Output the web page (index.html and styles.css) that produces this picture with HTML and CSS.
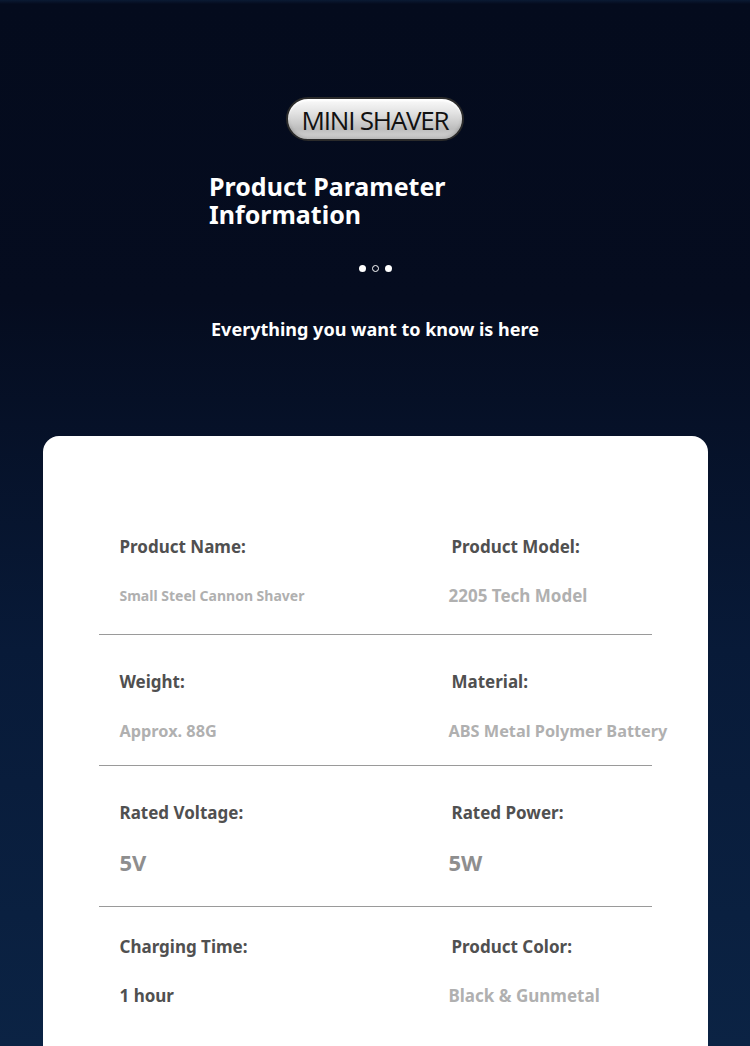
FILE: index.html
```html
<!DOCTYPE html>
<html lang="en">
<head>
<meta charset="utf-8">
<title>Mini Shaver - Product Parameter Information</title>
<link rel="stylesheet" href="styles.css">
</head>
<body>
<div class="page">
  <header class="hero">
    <div class="pill">MINI SHAVER</div>
    <div class="hero-text">
      <h1 class="title"><span class="line">Product Parameter</span><span class="line">Information</span></h1>
      <div class="dots"><span class="dot"></span><span class="dot hollow"></span><span class="dot"></span></div>
      <p class="subtitle">Everything you want to know is here</p>
    </div>
  </header>
  <main class="card">
    <div class="row">
      <div class="cell"><div class="label">Product Name:</div><div class="value small">Small Steel Cannon Shaver</div></div>
      <div class="cell right"><div class="label">Product Model:</div><div class="value wide">2205 Tech Model</div></div>
    </div>
    <div class="row">
      <div class="cell"><div class="label">Weight:</div><div class="value">Approx. 88G</div></div>
      <div class="cell right"><div class="label">Material:</div><div class="value">ABS Metal Polymer Battery</div></div>
    </div>
    <div class="row">
      <div class="cell"><div class="label">Rated Voltage:</div><div class="value big">5V</div></div>
      <div class="cell right"><div class="label">Rated Power:</div><div class="value big">5W</div></div>
    </div>
    <div class="row last">
      <div class="cell"><div class="label">Charging Time:</div><div class="value dark">1 hour</div></div>
      <div class="cell right"><div class="label">Product Color:</div><div class="value wide">Black &amp; Gunmetal</div></div>
    </div>
  </main>
</div>
</body>
</html>
```

FILE: styles.css
```css
* { box-sizing: border-box; }
html, body { margin: 0; padding: 0; }
body {
  width: 750px;
  height: 1046px;
  overflow: hidden;
  background: linear-gradient(180deg, #0a1a33 0px, #040b1d 4px, #050c1f 300px, #081a38 650px, #0b2344 1046px);
  font-family: "Noto Sans", "Open Sans", "DejaVu Sans", sans-serif;
}
.page { display: flex; flex-direction: column; align-items: center; }
.hero {
  padding-top: 97px;
  display: flex;
  flex-direction: column;
  align-items: center;
}
.pill {
  width: 178px;
  height: 44px;
  border-radius: 22px;
  border: 2px solid #2b2b2b;
  background: linear-gradient(180deg, #fbfbfb 0%, #e2e2e2 35%, #bdbdbd 75%, #d6d6d6 100%);
  box-shadow: inset 0 2px 2px rgba(255,255,255,0.9), inset 0 -2px 3px rgba(0,0,0,0.15);
  color: #111;
  font-family: "Open Sans", sans-serif;
  font-size: 26px;
  font-weight: 400;
  letter-spacing: -1.2px;
  display: flex;
  align-items: center;
  justify-content: center;
  line-height: 1;
  padding-top: 1px;
}
.hero-text {
  width: 332px;
  display: flex;
  flex-direction: column;
  align-items: center;
}
.title {
  align-self: stretch;
  margin: 31px 0 0;
  color: #fff;
  font-size: 25px;
  line-height: 28px;
  font-weight: 700;
  text-align: left;
  display: flex;
  flex-direction: column;
}
.line { display: block; white-space: nowrap; }
.dots {
  margin-top: 37px;
  display: flex;
  gap: 6px;
}
.dot {
  width: 7px;
  height: 7px;
  border-radius: 50%;
  background: #fff;
}
.dot.hollow {
  background: transparent;
  border: 1.8px solid #fff;
}
.subtitle {
  margin: 45px 0 0;
  color: #fff;
  font-size: 18px;
  line-height: 24px;
  font-weight: 700;
  white-space: nowrap;
}
.card {
  margin-top: 95px;
  width: 665px;
  height: 700px;
  background: #fff;
  border-radius: 16px 16px 0 0;
  padding: 64px 56px 0;
}
.row {
  display: grid;
  grid-template-columns: 353px 1fr;
  padding: 35px 0 23px;
  border-bottom: 1.5px solid #9a9a9a;
}
.row:nth-child(2) { padding-bottom: 19px; }
.row:nth-child(3) { padding-bottom: 29px; }
.row.last { border-bottom: none; padding-top: 28px; }
.cell { padding-left: 21px; }
.cell.right { padding-left: 0; }
.label {
  height: 24px;
  line-height: 24px;
  font-size: 17px;
  font-weight: 700;
  color: #505050;
  white-space: nowrap;
}
.value {
  margin-top: 22px;
  height: 30px;
  line-height: 30px;
  font-size: 16.3px;
  font-weight: 700;
  color: #b0b0b0;
  white-space: nowrap;
}
.cell.right .value { margin-left: -3px; }
.value.small { font-size: 14px; }
.value.wide { font-size: 17px; }
.value.big { font-size: 22px; color: #8e8e8e; }
.value.dark { font-size: 17px; color: #505050; }
```
